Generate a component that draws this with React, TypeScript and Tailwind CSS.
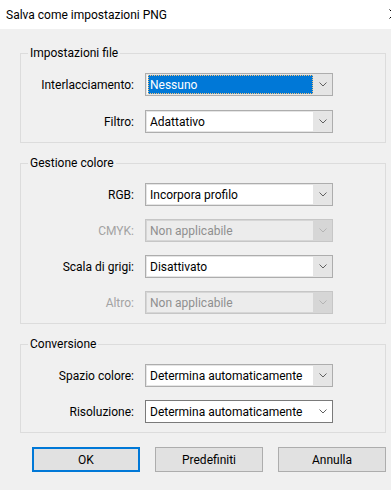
import React from "react";

type Variant = "normal" | "focused" | "disabled" | "edit";

interface RowDef {
  label: string;
  value: string;
  variant: Variant;
}

const groups: { title: string; gap: string; rows: RowDef[] }[] = [
  {
    title: "Impostazioni file",
    gap: "gap-[14px]",
    rows: [
      { label: "Interlacciamento:", value: "Nessuno", variant: "focused" },
      { label: "Filtro:", value: "Adattativo", variant: "normal" },
    ],
  },
  {
    title: "Gestione colore",
    gap: "gap-[13px]",
    rows: [
      { label: "RGB:", value: "Incorpora profilo", variant: "normal" },
      { label: "CMYK:", value: "Non applicabile", variant: "disabled" },
      { label: "Scala di grigi:", value: "Disattivato", variant: "normal" },
      { label: "Altro:", value: "Non applicabile", variant: "disabled" },
    ],
  },
  {
    title: "Conversione",
    gap: "gap-[13px]",
    rows: [
      { label: "Spazio colore:", value: "Determina automaticamente", variant: "normal" },
      { label: "Risoluzione:", value: "Determina automaticamente", variant: "edit" },
    ],
  },
];

function Chevron({ color }: { color: string }) {
  return (
    <svg width="8" height="5" viewBox="0 0 8 5" className="block">
      <path d="M0.5 0.5 L4 4 L7.5 0.5" fill="none" stroke={color} strokeWidth="1" />
    </svg>
  );
}

function Select({ value, variant }: { value: string; variant: Variant }) {
  if (variant === "edit") {
    return (
      <div className="flex h-[23px] w-[188px] items-center border border-[#7a7a7a] bg-white">
        <span className="flex-1 whitespace-nowrap pl-[4px] text-black">{value}</span>
        <span className="flex w-[19px] justify-center">
          <Chevron color="#606060" />
        </span>
      </div>
    );
  }
  const disabled = variant === "disabled";
  return (
    <div
      className={
        disabled
          ? "flex h-[23px] w-[188px] border border-[#c6c6c6] bg-[#d6d6d6]"
          : "flex h-[23px] w-[188px] border border-[#adadad] bg-[#e5e5e5]"
      }
    >
      <div
        className={
          disabled
            ? "m-[1px] mr-0 flex flex-1 items-center whitespace-nowrap bg-[#ececec] pl-[3px] text-[#8f8f8f]"
            : "m-[1px] mr-0 flex flex-1 items-center whitespace-nowrap bg-white pl-[3px] text-black"
        }
      >
        {variant === "focused" ? (
          <div className="-ml-[2px] flex h-[19px] flex-1 items-center border border-dotted border-[#f3c27a] bg-[#0078d7] pl-[1px] text-white">
            {value}
          </div>
        ) : (
          value
        )}
      </div>
      <span className="flex w-[19px] items-center justify-center">
        <Chevron color={disabled ? "#b4b4b4" : "#606060"} />
      </span>
    </div>
  );
}

export default function App() {
  return (
    <div
      className="relative h-[490px] w-[391px] overflow-hidden bg-[#f0f0f0] text-[12px] leading-[16px] text-black"
      style={{ fontFamily: 'Roboto, "Noto Sans", sans-serif' }}
    >
      <div className="flex h-[29px] items-center bg-white pl-[6px] text-[12px]">
        Salva come impostazioni PNG
      </div>
      <svg className="absolute right-[-8px] top-[9px]" width="10" height="10" viewBox="0 0 10 10">
        <path d="M0.5 0.5 L9.5 9.5 M9.5 0.5 L0.5 9.5" stroke="#000" strokeWidth="1" />
      </svg>

      <div className="flex flex-col pl-[20px] pr-[5px] pt-[16px]">
        {groups.map((g, i) => (
          <fieldset
            key={g.title}
            className={`border border-[#dcdcdc] pb-[9px] ${i === 0 ? "" : "mt-[12px]"}`}
          >
            <legend className="ml-[7px] px-[2px]">{g.title}</legend>
            <div className={`flex flex-col pt-[12px] ${g.gap}`}>
              {g.rows.map((r) => (
                <div key={r.label} className="flex items-center">
                  <span
                    className={`w-[113px] whitespace-nowrap text-right ${
                      r.variant === "disabled" ? "text-[#a3a3a3]" : ""
                    }`}
                  >
                    {r.label}
                  </span>
                  <span className="ml-[11px]">
                    <Select value={r.value} variant={r.variant} />
                  </span>
                </div>
              ))}
            </div>
          </fieldset>
        ))}

        <div className="mt-[14px] flex gap-[15px] pl-[12px]">
          <button className="h-[25px] w-[108px] border-2 border-[#0078d7] bg-[#e1e1e1]">
            OK
          </button>
          <button className="h-[25px] w-[108px] border border-[#adadad] bg-[#e1e1e1]">
            Predefiniti
          </button>
          <button className="h-[25px] w-[108px] border border-[#adadad] bg-[#e1e1e1]">
            Annulla
          </button>
        </div>
      </div>
    </div>
  );
}
